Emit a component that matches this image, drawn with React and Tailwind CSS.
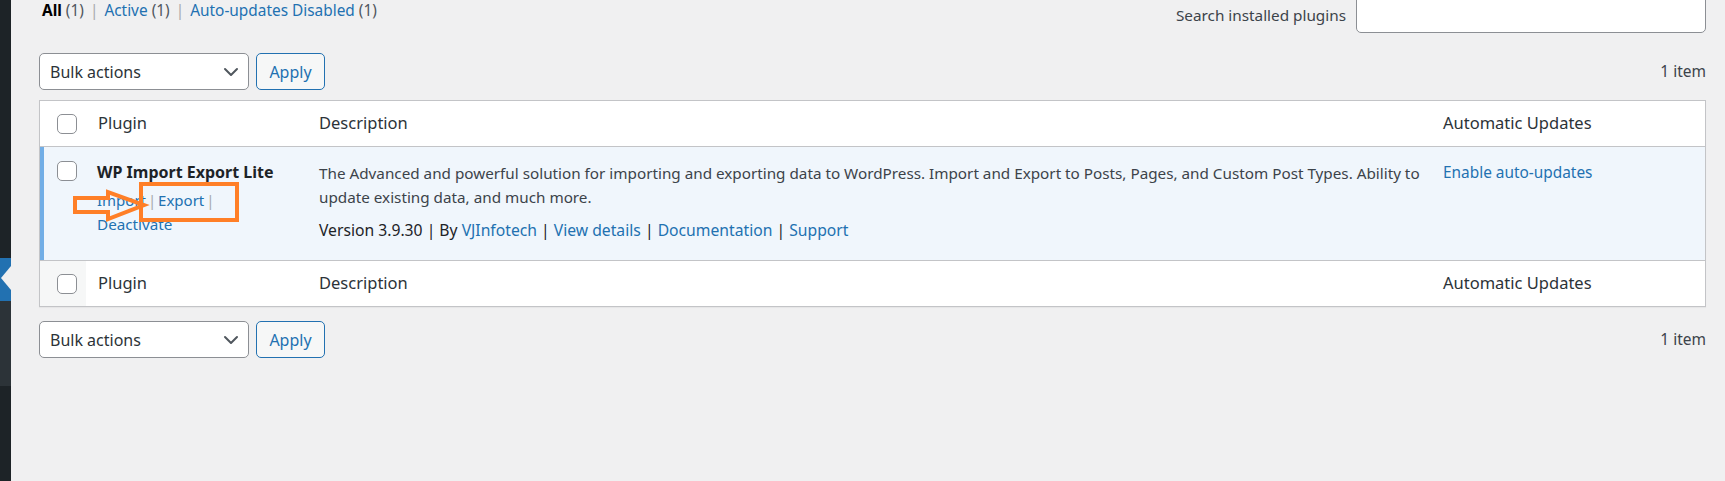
import React from 'react';

const font = "font-['Noto_Sans',sans-serif]";

function Checkbox() {
  return <span className="block w-[20px] h-[20px] rounded-[5px] border border-[#8c8f94] bg-white" />;
}

function Chevron() {
  return (
    <svg className="w-[16px] h-[10px]" viewBox="0 0 16 10" fill="none">
      <path d="M2 2l6 6 6-6" stroke="#50575e" strokeWidth="2" strokeLinecap="round" strokeLinejoin="round" />
    </svg>
  );
}

function TableNav() {
  return (
    <div className="flex items-center justify-between h-[37px]">
      <div className="flex items-center gap-[7px]">
        <div className="flex items-center justify-between w-[210px] h-[37px] pl-[10px] pr-[9px] rounded-[5px] border border-[#8c8f94] bg-white text-[#2c3338] text-[16px]">
          <span>Bulk actions</span>
          <Chevron />
        </div>
        <button className="h-[37px] w-[69px] rounded-[5px] border border-[#2271b1] bg-[#f6f7f7] text-[#2271b1] text-[16px]">
          Apply
        </button>
      </div>
      <span className="text-[15.5px] text-[#3c434a]">1 item</span>
    </div>
  );
}

const cols = 'grid grid-cols-[46px_223px_1124px_1fr]';

function HeadRow({ foot }) {
  return (
    <div className={`${cols} items-center text-[16.5px] text-[#2c3338] ${foot ? 'h-[45px]' : 'h-[46px] border-b border-[#c3c4c7]'}`}>
      <div className={`h-full flex items-center pl-[17px] ${foot ? 'bg-[#f6f7f7]' : ''}`}>
        <Checkbox />
      </div>
      <div className="pl-[12px]">Plugin</div>
      <div className="pl-[10px]">Description</div>
      <div className="pl-[10px]">Automatic Updates</div>
    </div>
  );
}

function PluginRow() {
  return (
    <div className={`${cols} h-[114px] bg-[#f0f6fc] border-b border-[#c3c4c7] text-[15.25px] leading-[24px] text-[#3c434a]`}>
      <div className="border-l-4 border-[#72aee6] pl-[13px] pt-[14px]">
        <Checkbox />
      </div>
      <div className="pl-[11px] pt-[13px]">
        <div className="font-bold text-[16px] text-[#1d2327]">WP Import Export Lite</div>
        <div className="mt-[4px] text-[#2271b1] text-[15px] [word-spacing:-2px]">
          Import <span className="text-[#a7aaad]">|</span> Export <span className="text-[#a7aaad]">|</span>
        </div>
        <div className="text-[#2271b1]">Deactivate</div>
      </div>
      <div className="pl-[10px] pt-[14px] min-w-0">
        <p className="whitespace-nowrap">
          The Advanced and powerful solution for importing and exporting data to WordPress. Import and Export to Posts, Pages, and Custom Post Types. Ability to
          <br />
          update existing data, and much more.
        </p>
        <p className="mt-[9px] text-[15.7px] text-[#1d2327]">
          Version 3.9.30 | By <span className="text-[#2271b1]">VJInfotech</span> |{' '}
          <span className="text-[#2271b1]">View details</span> |{' '}
          <span className="text-[#2271b1]">Documentation</span> |{' '}
          <span className="text-[#2271b1]">Support</span>
        </p>
      </div>
      <div className="pl-[10px] pt-[14px] text-[15.4px] text-[#2271b1]">Enable auto-updates</div>
    </div>
  );
}

export default function App() {
  return (
    <div className={`relative flex w-[1725px] h-[481px] overflow-hidden bg-[#f0f0f1] ${font}`}>
      <aside className="w-[11px] flex flex-col shrink-0">
        <div className="h-[258px] bg-[#1d2327]" />
        <div className="relative h-[43px] bg-[#2271b1]">
          <span className="absolute right-0 top-[8px] w-0 h-0 border-y-[12px] border-y-transparent border-r-[10px] border-r-[#f0f0f1]" />
        </div>
        <div className="h-[85px] bg-[#2c3338]" />
        <div className="flex-1 bg-[#1d2327]" />
      </aside>

      <main className="flex-1 min-w-0 pl-[28px] pr-[19px]">
        <div className="flex justify-between items-start h-[53px]">
          <div className="pl-[3px] pt-[1px] text-[15.4px] leading-[20px] text-[#50575e]">
            <span className="font-bold text-black">All</span> (1) <span className="text-[#a7aaad] px-[2px]">|</span>{' '}
            <span className="text-[#2271b1]">Active</span> (1) <span className="text-[#a7aaad] px-[2px]">|</span>{' '}
            <span className="text-[#2271b1]">Auto-updates Disabled</span> (1)
          </div>
          <div className="flex items-start gap-[10px] -mt-[7px]">
            <span className="mt-[10px] text-[15.3px] leading-[24px] text-[#3c434a]">Search installed plugins</span>
            <div className="w-[350px] h-[40px] rounded-[5px] border border-[#8c8f94] bg-white" />
          </div>
        </div>

        <TableNav />

        <div className="mt-[10px] border border-[#c3c4c7] bg-white shadow-[0_1px_1px_rgba(0,0,0,0.04)]">
          <HeadRow />
          <PluginRow />
          <HeadRow foot />
        </div>

        <div className="mt-[14px]">
          <TableNav />
        </div>
      </main>

      <svg className="absolute left-0 top-0 w-[1725px] h-[481px] pointer-events-none" viewBox="0 0 1725 481" fill="none">
        <rect x="141" y="184" width="96" height="36" stroke="#ff7f27" strokeWidth="4" />
        <path d="M75 198H108V192L144 205L108 219V212H75Z" stroke="#ff7f27" strokeWidth="4" strokeLinejoin="miter" />
      </svg>
    </div>
  );
}
